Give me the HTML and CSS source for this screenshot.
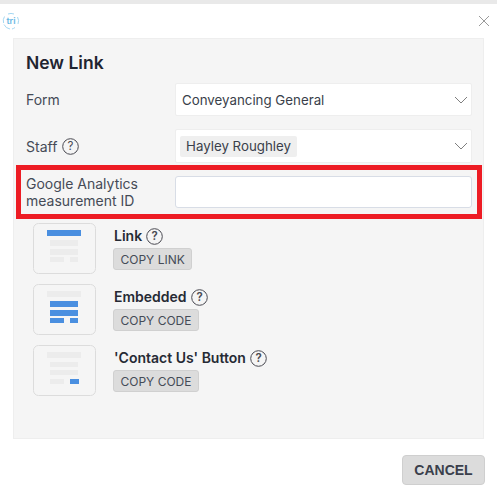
FILE: index.html
```html
<!DOCTYPE html>
<html lang="en">
<head>
<meta charset="utf-8">
<title>New Link</title>
<link rel="stylesheet" href="styles.css">
</head>
<body>
<div class="modal">
  <header class="modal-head">
    <svg class="logo" width="18" height="18" viewBox="0 0 18 18" fill="none" aria-hidden="true">
      <path class="logo-ring" d="M6 2 A8 8 0 0 1 12 2 M15.5 5 A8 8 0 0 1 16 12 M13 15.5 A8 8 0 0 1 10 17 M8 17 A8 8 0 0 1 2 12.5 M1.6 11 A8 8 0 0 1 2.5 4.5"/>
      <text x="9" y="12" class="logo-text" text-anchor="middle">tri</text>
    </svg>
    <svg class="close" width="12" height="12" viewBox="0 0 12 12" aria-hidden="true"><path d="M1 1 L11 11 M11 1 L1 11"/></svg>
  </header>
  <main class="panel">
    <h1 class="title">New Link</h1>
    <div class="field field-form">
      <label class="label">Form</label>
      <div class="control select">
        <span>Conveyancing General</span>
        <svg class="chev" width="14" height="8" viewBox="0 0 14 8"><path d="M1 1 L7 7 L13 1"/></svg>
      </div>
    </div>
    <div class="field field-staff">
      <label class="label">Staff <span class="help"><svg width="17" height="17" viewBox="0 0 17 17"><circle cx="8.5" cy="8.5" r="7.8"/><text x="8.5" y="12.4" text-anchor="middle">?</text></svg></span></label>
      <div class="control select staff-select">
        <span class="chip">Hayley Roughley</span>
        <svg class="chev" width="14" height="8" viewBox="0 0 14 8"><path d="M1 1 L7 7 L13 1"/></svg>
      </div>
    </div>
    <div class="field field-ga">
      <label class="label label-ga">Google Analytics<br>measurement ID</label>
      <div class="control input"></div>
    </div>
    <ul class="options">
      <li class="option">
        <svg class="thumb" width="63" height="51" viewBox="0 0 63 51">
          <rect class="frame" x="0.5" y="0.5" width="62" height="50" rx="5"/>
          <rect class="blue" x="14" y="7" width="34" height="6"/>
          <rect class="grey" x="17" y="17" width="28" height="6"/>
          <rect class="grey" x="17" y="26" width="28" height="6"/>
          <rect class="grey" x="17" y="34" width="14" height="5"/>
          <rect class="grey" x="37" y="34" width="8" height="5"/>
        </svg>
        <div class="option-body">
          <div class="option-title">Link <span class="help"><svg width="17" height="17" viewBox="0 0 17 17"><circle cx="8.5" cy="8.5" r="7.8"/><text x="8.5" y="12.4" text-anchor="middle">?</text></svg></span></div>
          <button class="copy">COPY LINK</button>
        </div>
      </li>
      <li class="option">
        <svg class="thumb" width="63" height="51" viewBox="0 0 63 51">
          <rect class="frame" x="0.5" y="0.5" width="62" height="50" rx="5"/>
          <rect class="grey" x="14" y="7" width="34" height="6"/>
          <rect class="blue" x="17" y="17" width="28" height="6"/>
          <rect class="blue" x="17" y="26" width="28" height="6"/>
          <rect class="blue" x="17" y="34" width="14" height="5"/>
          <rect class="blue" x="37" y="34" width="8" height="5"/>
        </svg>
        <div class="option-body">
          <div class="option-title">Embedded <span class="help"><svg width="17" height="17" viewBox="0 0 17 17"><circle cx="8.5" cy="8.5" r="7.8"/><text x="8.5" y="12.4" text-anchor="middle">?</text></svg></span></div>
          <button class="copy">COPY CODE</button>
        </div>
      </li>
      <li class="option">
        <svg class="thumb" width="63" height="51" viewBox="0 0 63 51">
          <rect class="frame" x="0.5" y="0.5" width="62" height="50" rx="5"/>
          <rect class="grey" x="14" y="7" width="34" height="6"/>
          <rect class="grey" x="17" y="17" width="28" height="5"/>
          <rect class="grey" x="17" y="25" width="28" height="5"/>
          <rect class="grey" x="17" y="34" width="14" height="5"/>
          <rect class="blue" x="37" y="34" width="9" height="5"/>
        </svg>
        <div class="option-body">
          <div class="option-title">'Contact Us' Button <span class="help"><svg width="17" height="17" viewBox="0 0 17 17"><circle cx="8.5" cy="8.5" r="7.8"/><text x="8.5" y="12.4" text-anchor="middle">?</text></svg></span></div>
          <button class="copy">COPY CODE</button>
        </div>
      </li>
    </ul>
    <div class="highlight"></div>
  </main>
  <footer class="modal-foot">
    <button class="cancel">CANCEL</button>
  </footer>
</div>
</body>
</html>
```
FILE: styles.css
```css
* { box-sizing: border-box; }
html, body { margin: 0; padding: 0; }
body {
  width: 497px;
  height: 492px;
  overflow: hidden;
  background: #e9e9e9;
  padding-top: 4px;
  font-family: Inter, "Liberation Sans", sans-serif;
  color: #3a3f4b;
}
.modal {
  height: 488px;
  background: #fff;
  display: flex;
  flex-direction: column;
}
.modal-head {
  height: 34px;
  display: flex;
  align-items: center;
  justify-content: space-between;
  padding: 2px 7px 2px 2px;
  flex: none;
}
.logo-ring { stroke: #a5d8f3; stroke-width: 1; }
.logo-text { font-size: 9px; font-weight: 600; fill: #6cb8e4; }
.close path { stroke: #9a9a9a; stroke-width: 1; fill: none; }
.panel {
  position: relative;
  width: 471px;
  height: 401px;
  margin-left: 13px;
  background: #f5f5f5;
  border: 1px solid #eeeeee;
  padding: 0 12px;
  flex: none;
}
.title {
  margin: 13px 0 0;
  font-size: 17.5px;
  line-height: 21px;
  font-weight: 600;
  color: #1f2430;
}
.field { display: flex; align-items: center; }
.field-form { margin-top: 10px; }
.field-staff { margin-top: 13px; }
.field-ga { margin-top: 12px; }
.label {
  width: 149px;
  flex: none;
  font-size: 14px;
  line-height: 17px;
  color: #454b57;
  display: flex;
  align-items: center;
  gap: 5px;
}
.label-ga { display: block; }
.control {
  width: 297px;
  background: #fff;
  border: 1px solid #eeeeee;
  border-radius: 2px;
  flex: none;
}
.select {
  height: 33px;
  padding: 0 3px 0 6px;
  display: flex;
  align-items: center;
  justify-content: space-between;
  font-size: 13.3px;
  color: #3a3f4b;
}
.staff-select { height: 34px; padding-left: 4px; }
.chip {
  background: #efefef;
  border-radius: 2px;
  padding: 2px 6px;
  line-height: 17px;
}
.chev path { stroke: #7f7f7f; stroke-width: 1; fill: none; }
.input {
  height: 32px;
  border-color: #d8dde6;
  border-radius: 3px;
}
.help { display: inline-flex; vertical-align: middle; }
.help circle { fill: none; stroke: #4a4a52; stroke-width: 1; }
.help text { font-size: 11.5px; font-family: Inter, sans-serif; fill: #4a4a52; }
.options {
  list-style: none;
  margin: 14px 0 0;
  padding: 0 0 0 7px;
  display: flex;
  flex-direction: column;
  gap: 10px;
}
.option { display: flex; height: 51px; gap: 18px; align-items: flex-start; }
.thumb { flex: none; }
.frame { fill: #f5f5f5; stroke: #dcdcdc; }
.blue { fill: #4a8fe0; }
.grey { fill: #ececec; }
.option-body { padding-top: 4px; }
.option-title {
  font-size: 14px;
  line-height: 18px;
  font-weight: 600;
  color: #262a34;
  display: flex;
  align-items: center;
  gap: 4px;
}
.copy {
  display: block;
  margin: 3px 0 0 -1px;
  height: 22px;
  padding: 0 6.5px;
  border: 1px solid #d0d0d0;
  border-radius: 3px;
  background: #dcdcdc;
  font-family: inherit;
  font-size: 12px;
  color: #454b57;
}
.highlight {
  position: absolute;
  left: 2px;
  top: 126px;
  width: 466px;
  height: 54px;
  border: 5px solid #ed1c24;
  pointer-events: none;
}
.modal-foot {
  display: flex;
  justify-content: flex-end;
  padding: 16px 12px 0 0;
}
.cancel {
  width: 83px;
  height: 30px;
  border: 1px solid #cfcfcf;
  border-radius: 4px;
  background: #dcdcdc;
  font-family: "Liberation Sans", Arial, sans-serif;
  font-size: 14px;
  font-weight: 700;
  color: #3a3f4b;
}
```
